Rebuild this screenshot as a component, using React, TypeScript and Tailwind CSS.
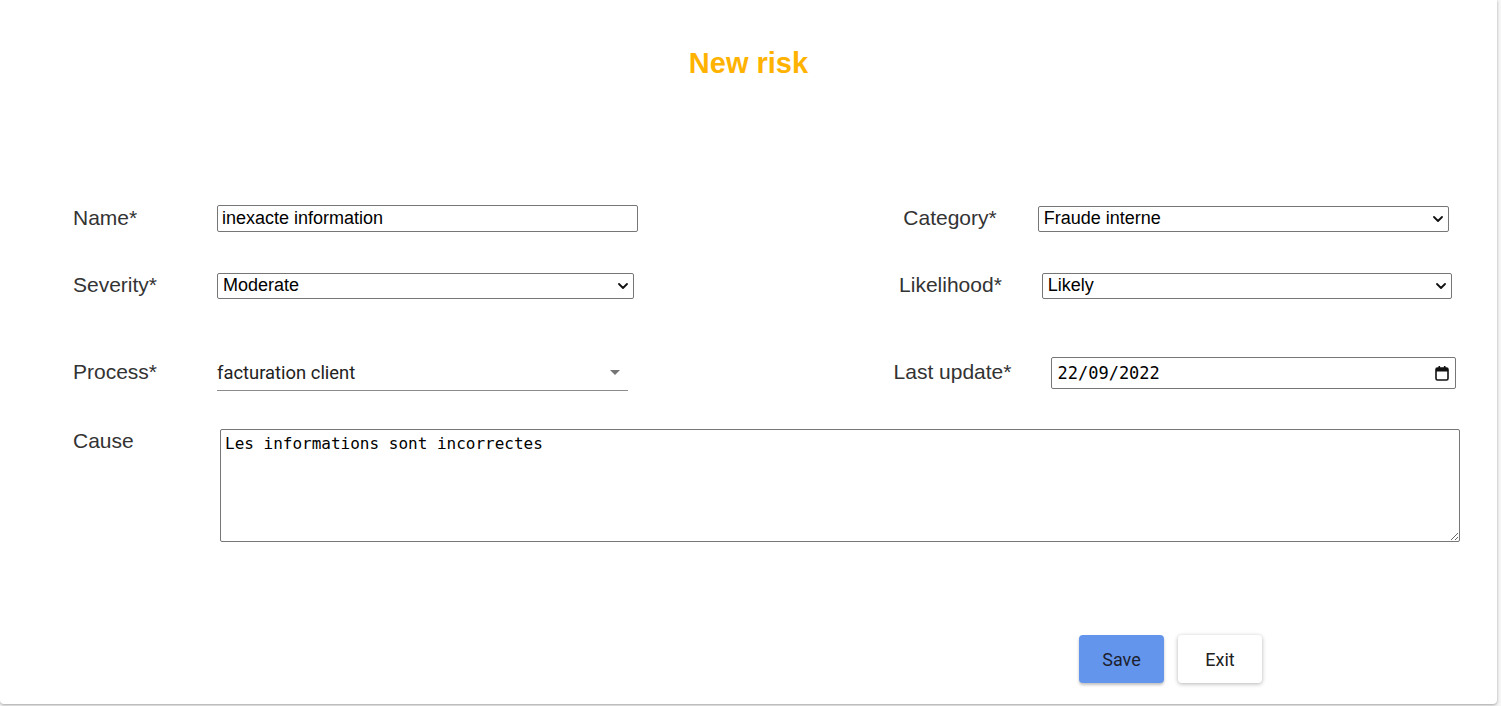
import React from "react";

const arial = { fontFamily: '"Liberation Sans", Arial, sans-serif' };

function Chevron() {
  return (
    <svg
      className="pointer-events-none absolute right-[6px] top-1/2 -translate-y-1/2"
      width="10"
      height="6"
      viewBox="0 0 10 6"
      fill="none"
    >
      <path d="M1 1l4 4 4-4" stroke="#111" strokeWidth="1.8" strokeLinecap="round" strokeLinejoin="round" />
    </svg>
  );
}

function NativeSelect({ value, width }: { value: string; width: string }) {
  return (
    <div className={`relative ${width}`}>
      <select
        defaultValue={value}
        className="h-full w-full appearance-none rounded-[2px] border border-[#767676] bg-white pb-[2px] pl-[5px] pr-6 text-[18px] leading-5 text-black outline-none"
        style={arial}
      >
        <option>{value}</option>
      </select>
      <Chevron />
    </div>
  );
}

function Label({ children, className = "" }: { children: React.ReactNode; className?: string }) {
  return (
    <span className={`relative -top-[1px] text-[21px] leading-6 text-[#333] ${className}`} style={arial}>
      {children}
    </span>
  );
}

function CalendarIcon() {
  return (
    <svg className="pointer-events-none absolute right-[7px] top-1/2 -translate-y-1/2" width="14" height="16" viewBox="0 0 14 16">
      <rect x="1" y="3" width="12" height="12" rx="1.5" fill="none" stroke="#111" strokeWidth="1.6" />
      <rect x="1" y="3" width="12" height="3.5" fill="#111" />
      <rect x="3.5" y="1" width="1.6" height="3" fill="#111" />
      <rect x="8.9" y="1" width="1.6" height="3" fill="#111" />
    </svg>
  );
}

export default function App() {
  return (
    <div className="min-h-screen bg-[#f6f6f6]">
      <div className="flex h-[704px] w-[1497px] flex-col rounded-b-[4px] bg-white shadow-[0_1px_3px_rgba(0,0,0,0.35)]">
        <h1
          className="pt-[46px] text-center text-[29px] font-bold leading-[34px] text-[#FFB300]"
          style={arial}
        >
          New risk
        </h1>

        {/* row 1 */}
        <div className="mt-[125px] flex h-[27px] items-center">
          <div className="flex w-[855px] items-center pl-[73px]">
            <Label className="w-[144px]">Name*</Label>
            <input
              defaultValue="inexacte information"
              className="h-[27px] w-[421px] rounded-[2px] border border-[#767676] bg-white px-[4px] text-[18px] text-black outline-none"
              style={arial}
            />
          </div>
          <div className="flex w-[642px] items-center justify-center gap-[41px]">
            <Label>Category*</Label>
            <NativeSelect value="Fraude interne" width="w-[411px] h-[26px]" />
          </div>
        </div>

        {/* row 2 */}
        <div className="mt-[41px] flex h-[26px] items-center">
          <div className="flex w-[855px] items-center pl-[73px]">
            <Label className="w-[144px]">Severity*</Label>
            <NativeSelect value="Moderate" width="w-[417px] h-[26px]" />
          </div>
          <div className="flex w-[644px] items-center justify-center gap-[40px]">
            <Label>Likelihood*</Label>
            <NativeSelect value="Likely" width="w-[410px] h-[26px]" />
          </div>
        </div>

        {/* row 3 */}
        <div className="mt-[58px] flex h-[32px] items-center">
          <div className="flex w-[855px] items-center pl-[73px]">
            <Label className="w-[144px]">Process*</Label>
            <div className="relative mt-[2px] h-[34px] w-[411px] border-b border-[#8c8c8c]">
              <span
                className="absolute left-0 top-[4px] text-[18.4px] leading-6 text-[#222]"
                style={{ fontFamily: "Roboto, sans-serif" }}
              >
                facturation client
              </span>
              <svg className="absolute right-[1px] top-[3px]" width="24" height="24" viewBox="0 0 24 24">
                <path d="M7 10l5 5 5-5z" fill="#757575" />
              </svg>
            </div>
          </div>
          <div className="flex w-[640px] items-center justify-center gap-[40px]">
            <Label>Last update*</Label>
            <div className="relative h-[32px] w-[405px]">
              <input
                readOnly
                value="22/09/2022"
                className="h-full w-full rounded-[2px] border border-[#767676] bg-white pl-[5px] text-[17px] text-black outline-none"
                style={{ fontFamily: '"DejaVu Sans Mono", monospace' }}
              />
              <CalendarIcon />
            </div>
          </div>
        </div>

        {/* row 4 */}
        <div className="mt-[40px] flex items-start pl-[73px]">
          <Label className="mt-[1px] w-[147px]">Cause</Label>
          <textarea
            defaultValue="Les informations sont incorrectes"
            className="h-[113px] w-[1240px] rounded-[2px] border border-[#767676] bg-white px-[4px] pt-[4px] pb-[2px] text-[16px] leading-[19px] text-black outline-none"
            style={{ fontFamily: '"DejaVu Sans Mono", monospace' }}
          />
        </div>

        {/* actions */}
        <div className="mt-[93px] flex justify-end gap-[14px] pr-[235px]" style={{ fontFamily: "Roboto, sans-serif" }}>
          <button className="h-[48px] w-[85px] rounded-[4px] bg-[#6495ED] text-[18px] text-[#1c1f2e] shadow-[0_2px_3px_rgba(0,0,0,0.25)]">
            Save
          </button>
          <button className="h-[48px] w-[84px] rounded-[4px] bg-white text-[18px] text-[#222] shadow-[0_1px_4px_rgba(0,0,0,0.3)]">
            Exit
          </button>
        </div>
      </div>
    </div>
  );
}
